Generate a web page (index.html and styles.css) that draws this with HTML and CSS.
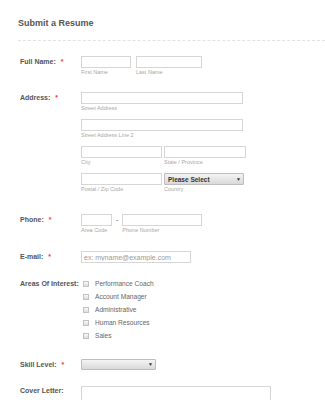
FILE: index.html
```html
<!DOCTYPE html>
<html lang="en">
<head>
    <meta charset="UTF-8">
    <meta name="viewport" content="width=device-width, initial-scale=1.0">
    <title>Submit a Resume</title>
    <link rel="stylesheet" href="styles.css">
</head>
<body>
    <header class="form-header">
        <h1>Submit a Resume</h1>
    </header>
    <form class="form-list">
        <div class="form-line line-name">
            <label class="form-label">Full Name:<span class="req">*</span></label>
            <div class="form-input row">
                <div class="field w-first">
                    <input type="text">
                    <span class="sub">First Name</span>
                </div>
                <div class="field w-last">
                    <input type="text">
                    <span class="sub">Last Name</span>
                </div>
            </div>
        </div>

        <div class="form-line line-address">
            <label class="form-label">Address:<span class="req">*</span></label>
            <div class="form-input">
                <div class="addr-row">
                    <div class="field w-street">
                        <input type="text">
                        <span class="sub">Street Address</span>
                    </div>
                </div>
                <div class="addr-row">
                    <div class="field w-street">
                        <input type="text">
                        <span class="sub">Street Address Line 2</span>
                    </div>
                </div>
                <div class="addr-row row tight">
                    <div class="field w-city">
                        <input type="text">
                        <span class="sub">City</span>
                    </div>
                    <div class="field w-state">
                        <input type="text">
                        <span class="sub">State / Province</span>
                    </div>
                </div>
                <div class="addr-row row tight">
                    <div class="field w-city">
                        <input type="text">
                        <span class="sub">Postal / Zip Code</span>
                    </div>
                    <div class="field w-country">
                        <div class="select-box">
                            <select><option>Please Select</option></select>
                            <span class="arrow">&#9660;</span>
                        </div>
                        <span class="sub">Country</span>
                    </div>
                </div>
            </div>
        </div>

        <div class="form-line line-phone">
            <label class="form-label">Phone:<span class="req">*</span></label>
            <div class="form-input row">
                <div class="field w-area">
                    <input type="text">
                    <span class="sub">Area Code</span>
                </div>
                <span class="dash">-</span>
                <div class="field w-phone">
                    <input type="text">
                    <span class="sub">Phone Number</span>
                </div>
            </div>
        </div>

        <div class="form-line line-email">
            <label class="form-label">E-mail:<span class="req">*</span></label>
            <div class="form-input">
                <div class="field w-email">
                    <input type="text" placeholder="ex: myname@example.com">
                </div>
            </div>
        </div>

        <div class="form-line line-areas">
            <label class="form-label tall">Areas Of Interest:</label>
            <div class="form-input checks">
                <label class="check"><input type="checkbox">Performance Coach</label>
                <label class="check"><input type="checkbox">Account Manager</label>
                <label class="check"><input type="checkbox">Administrative</label>
                <label class="check"><input type="checkbox">Human Resources</label>
                <label class="check"><input type="checkbox">Sales</label>
            </div>
        </div>

        <div class="form-line line-skill">
            <label class="form-label">Skill Level:<span class="req">*</span></label>
            <div class="form-input">
                <div class="select-box w-skill">
                    <select><option></option></select>
                    <span class="arrow">&#9660;</span>
                </div>
            </div>
        </div>

        <div class="form-line line-cover">
            <label class="form-label">Cover Letter:</label>
            <div class="form-input">
                <textarea class="cover"></textarea>
            </div>
        </div>
    </form>
</body>
</html>
```

FILE: styles.css
```css
body {
    margin: 0;
    padding: 0;
    background-color: white;
    font-family: "Liberation Sans", Arial, sans-serif;
    color: #555;
    overflow: hidden;
}
.form-header {
    margin-left: 18px;
    padding: 17px 0 11px;
    border-bottom: 1px dashed #e2e2e2;
}
.form-header h1 {
    margin: 0;
    font-size: 9px;
    line-height: 12px;
    font-weight: bold;
    color: #555;
}
.form-list {
    padding-top: 15px;
}
.form-line {
    display: flex;
    padding-left: 20px;
}
.form-label {
    width: 61px;
    flex-shrink: 0;
    font-size: 7px;
    font-weight: bold;
    line-height: 12px;
    color: #555;
    white-space: nowrap;
}
.form-label.tall {
    line-height: 13px;
}
.req {
    color: #f23a3a;
    margin-left: 5px;
    font-size: 7px;
}
.row {
    display: flex;
    gap: 5px;
}
.row.tight {
    gap: 2px;
}
.field {
    display: flex;
    flex-direction: column;
}
.field input {
    width: 100%;
}
input[type="text"] {
    box-sizing: border-box;
    height: 12px;
    margin: 0;
    padding: 0 2px;
    border: 1px solid #d6d6d6;
    font-family: inherit;
    font-size: 7px;
    color: #555;
    background: white;
}
input::placeholder {
    color: #9a9a9a;
}
.sub {
    display: block;
    font-size: 5.5px;
    line-height: 8px;
    color: #a8a8a8;
    white-space: nowrap;
}
.w-first { width: 50px; }
.w-last { width: 66px; }
.w-street { width: 162px; }
.w-city { width: 81px; }
.w-state { width: 82px; }
.w-country { width: 80px; }
.w-area { width: 31px; }
.w-phone { width: 80px; }
.w-email { width: 110px; }
.w-skill { width: 75px; }

.addr-row {
    margin-bottom: 7px;
}
.addr-row:last-child {
    margin-bottom: 0;
}
.dash {
    font-size: 7px;
    line-height: 12px;
    margin: 0 -1px;
    color: #555;
}

.select-box {
    position: relative;
    height: 12px;
}
.select-box select {
    appearance: none;
    -webkit-appearance: none;
    display: block;
    box-sizing: border-box;
    width: 100%;
    height: 100%;
    margin: 0;
    padding: 0 3px;
    border: 1px solid #bdbdbd;
    border-radius: 1px;
    background: linear-gradient(#f4f4f4, #d9d9d9);
    font-family: inherit;
    font-size: 6.5px;
    font-weight: bold;
    color: #333;
}
.select-box .arrow {
    position: absolute;
    right: 3px;
    top: 0;
    font-size: 5px;
    line-height: 12px;
    color: #333;
    pointer-events: none;
}
.w-skill.select-box {
    height: 11px;
}
.w-skill .arrow {
    line-height: 11px;
}

.checks {
    display: flex;
    flex-direction: column;
}
.check {
    display: flex;
    align-items: center;
    height: 13px;
    font-size: 6.6px;
    color: #666;
}
.check input {
    appearance: none;
    -webkit-appearance: none;
    width: 6px;
    height: 6px;
    margin: 0 6px 0 2px;
    border: 1px solid #c2c2c2;
    background: linear-gradient(#fafafa, #dcdcdc);
    box-sizing: border-box;
}

.cover {
    display: block;
    box-sizing: border-box;
    width: 190px;
    height: 60px;
    margin: 0;
    border: 1px solid #d6d6d6;
    resize: none;
}

.line-name { margin-bottom: 16px; }
.line-address { margin-bottom: 21px; }
.line-phone { margin-bottom: 17px; }
.line-email { margin-bottom: 14px; }
.line-areas { margin-bottom: 17px; }
.line-skill { margin-bottom: 15px; }
.line-cover .form-label { line-height: 10px; }
```
